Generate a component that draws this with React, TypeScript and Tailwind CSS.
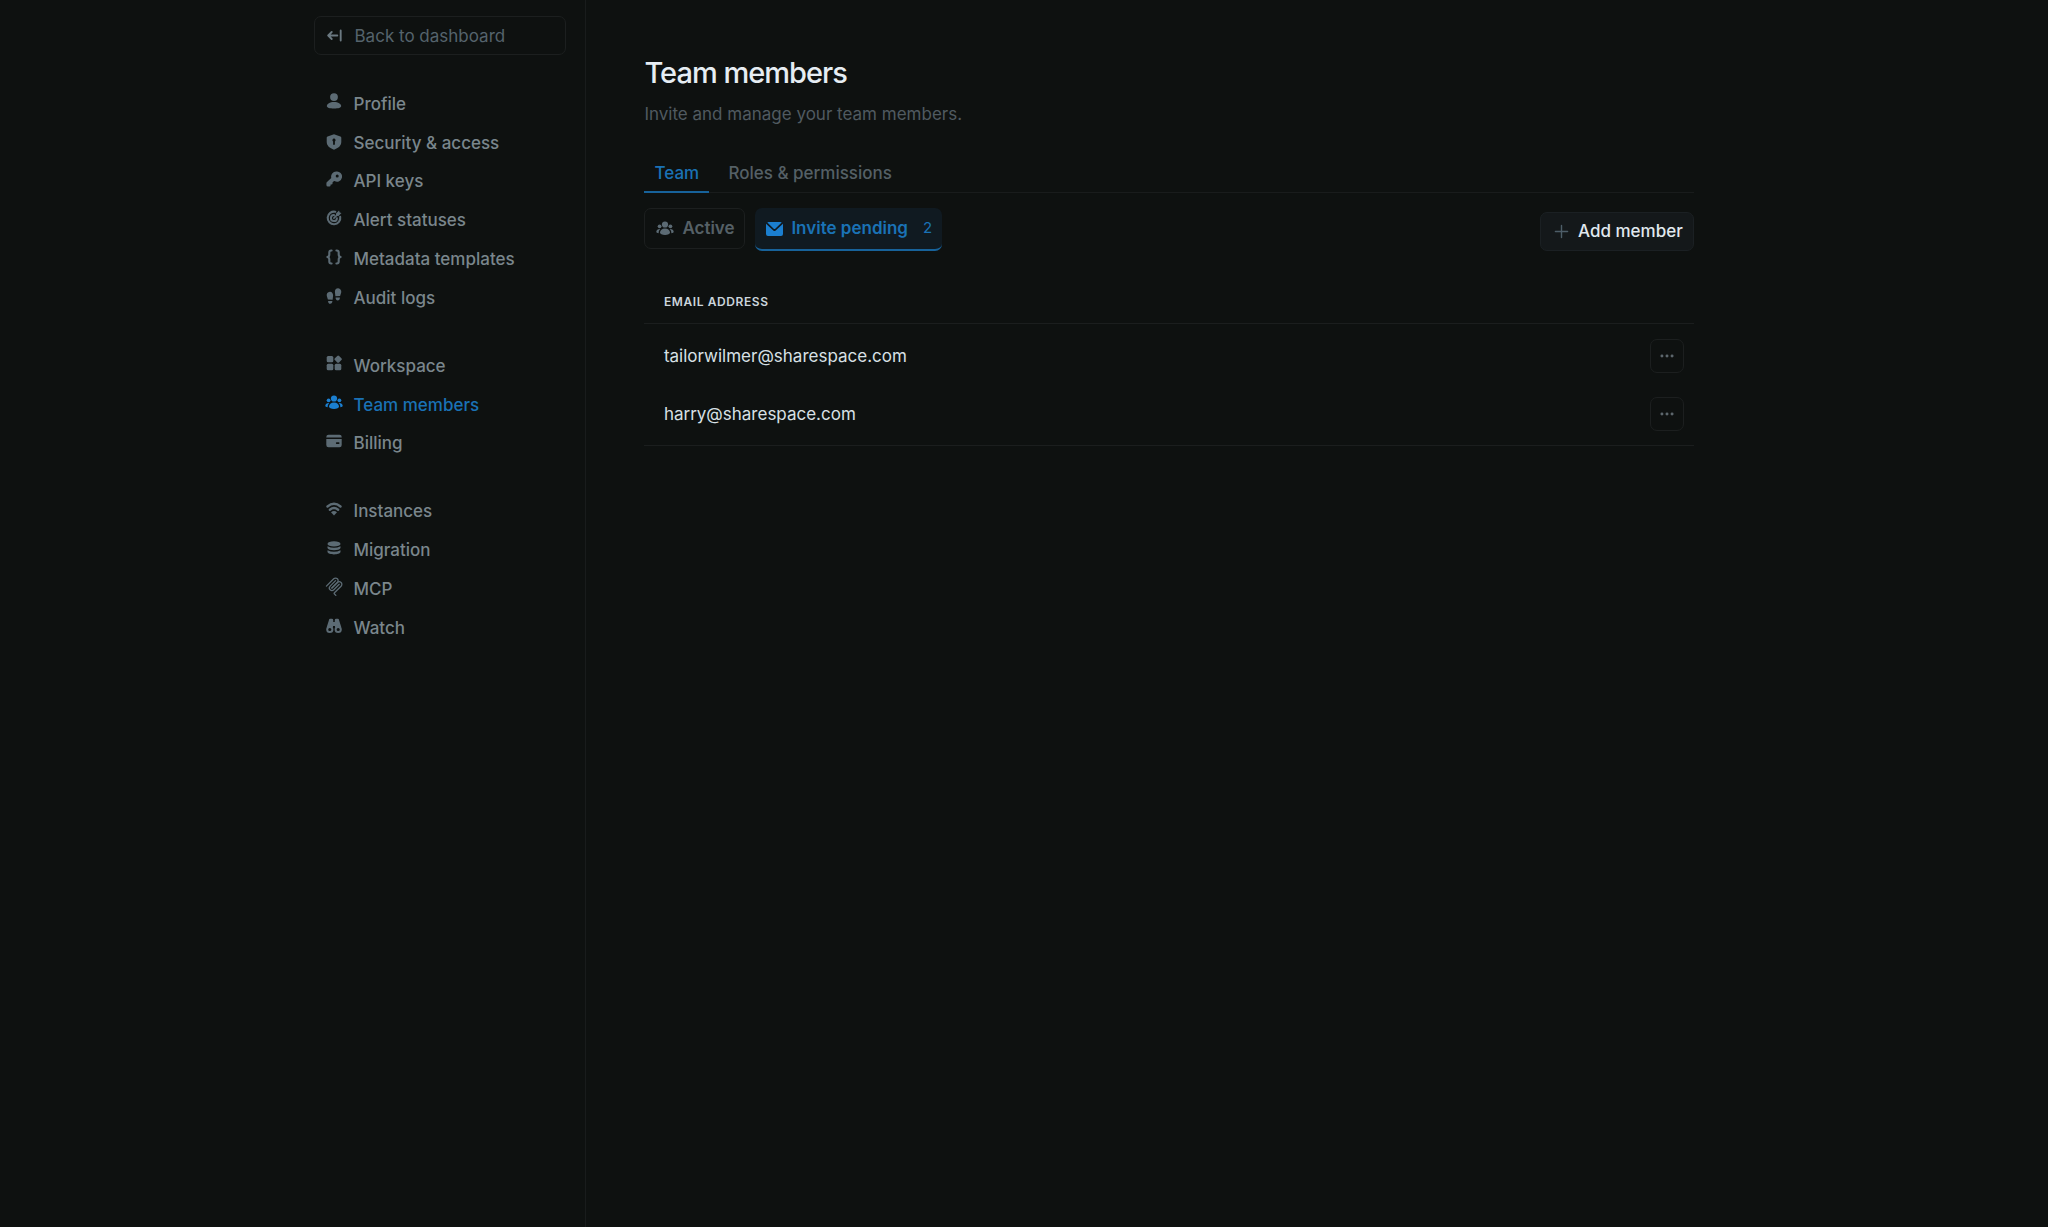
import type { ReactNode } from "react"

function Icon({ children, className = "size-4", viewBox = "0 0 16 16" }: { children: ReactNode; className?: string; viewBox?: string }) {
  return (
    <svg className={`${className} shrink-0`} viewBox={viewBox} fill="currentColor">
      {children}
    </svg>
  )
}

const stroke = { fill: "none", stroke: "currentColor", strokeLinecap: "round", strokeLinejoin: "round" } as const

const icons: Record<string, ReactNode> = {
  profile: (
    <>
      <circle cx="8" cy="4.1" r="3.9" />
      <path d="M8 8.9c4.200 0 7.200 2 7.200 4.200 0 1.700-2.700 2.500-7.200 2.500s-7.200-.8-7.200-2.500c0-2.200 3-4.200 7.200-4.200Z" />
    </>
  ),
  shield: (
    <path fillRule="evenodd" d="M8 .3 1.600 2.400Q.7 2.700.7 3.700v4.100c0 3.900 2.900 6.500 7.300 7.900 4.400-1.400 7.300-4 7.300-7.900V3.700q0-1-.9-1.300ZM8 4.600a1.600 1.600 0 0 0-.9 2.900V10a.9.9 0 0 0 1.800 0V7.500A1.600 1.600 0 0 0 8 4.600Z" />
  ),
  key: (
    <path fillRule="evenodd" d="M10.200.6a5.100 5.100 0 0 0-4.950 6.300L1 11q-.6.600-.6 1.200V14q0 1.500 1.500 1.500h1.500q1.200 0 1.200-1.200v-.8h.8q1.200 0 1.200-1.200v-1l1.200-1.100q.3-.2.7-.1A5.100 5.100 0 1 0 10.200.6Zm1 3a1.500 1.500 0 1 1 0 3 1.500 1.500 0 0 1 0-3Z" />
  ),
  target: (
    <>
      <path {...stroke} strokeWidth="2.100" d="M9.300 1.800A6.300 6.300 0 1 0 14.200 6.900" />
      <path {...stroke} strokeWidth="2" d="M8 5.100a3 3 0 1 0 2.900 3.100" />
      <path {...stroke} strokeWidth="1.700" d="m7.900 8.100 3.200-3.200" />
      <path d="M9.800 3.800 13 .6l.7 1.800 1.800.7-3.200 3.200-2-.5Z" />
    </>
  ),
  braces: (
    <path {...stroke} strokeWidth="2.100" d="M5.600 1.500h-.4Q3.300 1.500 3.300 3.400v2Q3.300 7.600 1.400 8q1.900.4 1.900 2.600v2q0 1.900 1.900 1.900h.4M10.400 1.500h.4q1.900 0 1.900 1.900v2q0 2.200 1.900 2.600-1.900.4-1.900 2.600v2q0 1.900-1.900 1.900h-.4" />
  ),
  footsteps: (
    <>
      <path d="M3.800 3.800C5.900 3.600 7.200 5.500 7.100 7.700L6.600 11.700 1.900 11.500.8 8C.3 5.900 1.700 3.900 3.800 3.800ZM2.100 12.900l4.300.2c0 1.500-.8 2.700-2.200 2.700s-2.100-1.100-2.100-2.900Z" />
      <path d="M12.200.2c-2.100-.1-3.400 1.600-3.300 3.900l.5 4.100 4.700-.1 1.100-3.500C15.700 2.400 14.300.3 12.200.2ZM9.600 9.500l4.300-.1c0 1.800-.8 3-2.200 3s-2.100-1.200-2.100-2.900Z" />
    </>
  ),
  workspace: (
    <>
      <rect x=".7" y=".9" width="6.600" height="6.400" rx="1.500" />
      <rect x=".7" y="8.800" width="6.600" height="6.400" rx="1.500" />
      <rect x="8.700" y="8.800" width="6.600" height="6.400" rx="1.500" />
      <rect x="9.200" y="1.200" width="5.900" height="5.900" rx="1.300" transform="rotate(45 12.150 4.150)" />
    </>
  ),
  users: (
    <>
      <circle cx="9" cy="4.500" r="3.100" />
      <circle cx="3.600" cy="6.300" r="1.900" />
      <circle cx="14.400" cy="6.300" r="1.900" />
      <path d="M9 8.500c3 0 5 2 5 4 0 1.700-2.100 2.400-5 2.400s-5-.7-5-2.400c0-2 2-4 5-4Z" />
      <path d="M3.900 9C1.700 9 .3 10.300.3 11.700c0 .9.800 1.400 2.400 1.500C2.500 11.600 3.100 10.200 4.300 9ZM14.100 9c2.200 0 3.600 1.300 3.600 2.700 0 .9-.8 1.400-2.400 1.500.2-1.600-.4-3-1.600-4.200Z" />
    </>
  ),
  billing: (
    <>
      <path d="M.3 4.600V4q0-2.200 2.200-2.200h11q2.200 0 2.200 2.200v.6Z" />
      <path fillRule="evenodd" d="M.3 6h15.400v6q0 2.200-2.200 2.200h-11Q.3 14.200.3 12Zm10.400 3.200a.8.800 0 0 0 0 1.700h2a.8.800 0 0 0 0-1.700Z" />
    </>
  ),
  wifi: (
    <>
      <path {...stroke} strokeWidth="2.400" d="M1.500 5.500q6.500-5.300 13 0M3.900 8.700q4.100-3.300 8.200 0" />
      <path d="M5 11.300Q8 8.900 11 11.300L8 14.400Z" />
    </>
  ),
  database: (
    <>
      <ellipse cx="8" cy="3.900" rx="6.500" ry="2.700" />
      <path d="M1.500 6.200Q8 9.200 14.500 6.200v1.900C13.800 11 2.200 11 1.500 8.100ZM1.500 10.200q6.500 3 13 0v1.800c-.7 3.200-12.300 3.200-13 0Z" />
    </>
  ),
  binoculars: (
    <>
      <path d="M3 2q0-1.200 1.200-1.200h1.600Q7.200.8 7.200 2v2h1.600V2q0-1.200 1.400-1.200h1.600Q13 .8 13 2l2.400 7.500H9V8H7v1.500H.6Z" />
      <path fillRule="evenodd" d="M3.800 7.900a3.600 3.600 0 1 1 0 7.200 3.600 3.600 0 0 1 0-7.200Zm0 2a1.600 1.600 0 1 0 0 3.200 1.600 1.600 0 0 0 0-3.200ZM12.200 7.900a3.600 3.600 0 1 1 0 7.200 3.600 3.600 0 0 1 0-7.200Zm0 2a1.600 1.600 0 1 0 0 3.200 1.600 1.600 0 0 0 0-3.200Z" />
    </>
  ),
}

function NavIcon({ name }: { name: string }) {
  if (name === "mcp") {
    return (
      <Icon className="size-[19px]" viewBox="6 0 174 176">
        <g {...stroke} strokeWidth="12">
          <path d="M18 84.853 85.882 16.971c9.373-9.373 24.569-9.373 33.941 0 9.373 9.372 9.373 24.568 0 33.941L68.558 102.177" />
          <path d="m69.265 101.470 50.558-50.558c9.373-9.373 24.569-9.373 33.942 0l.353.353c9.373 9.373 9.373 24.569 0 33.941L92.725 146.600c-3.124 3.124-3.124 8.189 0 11.313l12.606 12.607" />
          <path d="M102.853 33.941 52.648 84.146c-9.372 9.372-9.372 24.568 0 33.941 9.373 9.372 24.569 9.372 33.941 0l50.205-50.205" />
        </g>
      </Icon>
    )
  }
  if (name === "users") {
    return <Icon className="h-4 w-[18px]" viewBox="0 0 18 16">{icons.users}</Icon>
  }
  return <Icon>{icons[name]}</Icon>
}

const navGroups = [
  [
    { label: "Profile", icon: "profile" },
    { label: "Security & access", icon: "shield" },
    { label: "API keys", icon: "key" },
    { label: "Alert statuses", icon: "target" },
    { label: "Metadata templates", icon: "braces" },
    { label: "Audit logs", icon: "footsteps" },
  ],
  [
    { label: "Workspace", icon: "workspace" },
    { label: "Team members", icon: "users" },
    { label: "Billing", icon: "billing" },
  ],
  [
    { label: "Instances", icon: "wifi" },
    { label: "Migration", icon: "database" },
    { label: "MCP", icon: "mcp" },
    { label: "Watch", icon: "binoculars" },
  ],
]

const invites = ["tailorwilmer@sharespace.com", "harry@sharespace.com"]

function Sidebar() {
  return (
    <aside className="w-[586px] shrink-0 border-r border-[#191c1c] pl-[314px] pt-4">
      <button className="flex h-[39px] w-[252px] items-center rounded-[7px] border border-[#1c1f1f] pl-3 text-[17px] text-[#55636c]">
        <Icon className="size-[15px] text-[#6b7981]">
          <path {...stroke} strokeWidth="2" d="M11 8H1.500M5 4.300 1.300 8 5 11.700M14.600 2.700v10.600" />
        </Icon>
        <span className="ml-[12.500px] pt-0.5">Back to dashboard</span>
      </button>
      <nav className="mt-[29px] flex flex-col gap-[29px]">
        {navGroups.map((group, i) => (
          <ul key={i}>
            {group.map((item) => {
              const active = item.label === "Team members"
              return (
                <li key={item.label} className={`flex h-[38.85px] items-center pl-[10px] text-[17px] font-medium ${active ? "text-[#1a72b5]" : "text-[#7a868c]"}`}>
                  <span className={`flex w-5 justify-center ${item.icon === "shield" ? "" : "pb-1"} ${active ? "text-[#1b7fd0]" : "text-[#5c6b74]"}`}>
                    <NavIcon name={item.icon} />
                  </span>
                  <span className="ml-[9.500px] pt-0.5">{item.label}</span>
                </li>
              )
            })}
          </ul>
        ))}
      </nav>
    </aside>
  )
}

export default function App() {
  return (
    <div className="flex h-[1227px] w-[2048px] overflow-hidden bg-[#0e1110] font-['Inter',sans-serif] whitespace-nowrap">
      <Sidebar />

      <main className="w-[1107.500px] pl-[58.400px] pt-[54px]">
        <h1 className="text-[29px] leading-[38px] font-medium tracking-[-0.98px] text-[#e6edf3]">Team members</h1>
        <p className="mt-2 text-[17px] leading-7 text-[#505a60]">Invite and manage your team members.</p>

        <div className="mt-[25px] flex h-10 border-b border-[#191c1c] text-[17px] font-medium">
          <div className="-mb-px flex w-[65px] justify-center border-b-2 border-[#17629a] text-[#1a72b5]">
            <span className="pt-2">Team</span>
          </div>
          <span className="ml-[19px] pt-2 text-[#556066]">Roles & permissions</span>
        </div>

        <div className="mt-[15px] flex items-start">
          <button className="flex h-[41px] w-[101px] items-center rounded-[7px] border border-[#1c1f1f] pl-[11px] text-[17px] font-semibold text-[#556066]">
            <span className="pb-0.5 text-[#5c6b74]"><NavIcon name="users" /></span>
            <span className="ml-2 pt-px">Active</span>
          </button>
          <button className="ml-[10px] flex h-[43px] w-[187px] items-center rounded-[7px] border-b-2 border-[#17629a] bg-[#101a21] pl-[11px] text-[17px] font-semibold text-[#1a72b5]">
            <Icon className="h-[14px] w-[17px] text-[#1b7fd0]" viewBox="0 0 17 14">
              <path d="M0 1.700 7.300 8.600q1.200 1 2.400 0L17 1.700V12q0 2-2 2H2q-2 0-2-2ZM1.300.500Q1.700 0 2.500 0h12q.8 0 1.200.500L9 6.900q-.5.400-1 0Z" />
            </Icon>
            <span className="ml-2 pt-px">Invite pending</span>
            <span className="ml-[15px] text-[15px] font-normal">2</span>
          </button>
          <button className="mt-1 ml-auto flex h-[39px] w-[154px] items-center rounded-[7px] border border-[#1b2023] bg-[#14181a] pl-[13px] text-[17px] font-medium text-[#e1e9ef]">
            <Icon className="size-[15px] text-[#4d5d68]">
              <path {...stroke} strokeWidth="1.500" d="M8 1.500v13M1.500 8h13" />
            </Icon>
            <span className="ml-[9.500px] pt-px">Add member</span>
          </button>
        </div>

        <table className="mt-[28px] w-full border-b border-[#1b1e1e] text-left">
          <thead>
            <tr className="h-11 border-b border-[#1b1e1e]">
              <th className="pt-0.5 pl-[19.500px] text-[12px] font-semibold tracking-[0.6px] text-[#cbd5dc]">EMAIL ADDRESS</th>
              <th />
            </tr>
          </thead>
          <tbody>
            {invites.map((email, i) => (
              <tr key={email} className={i === 0 ? "h-[65px]" : "h-[57px]"}>
                <td className={`pl-[19.500px] text-[17px] text-[#d8e0e5] ${i === 0 ? "pt-0.5" : "pb-[3px]"}`}>{email}</td>
                <td className={`pr-[10px] ${i === 0 ? "" : "pb-1"}`}>
                  <button className="ml-auto flex size-[34px] items-center justify-center rounded-[7px] border border-[#1c1f1f] text-[#5c666c]">
                    <Icon className="size-[14px]">
                      <circle cx="2.200" cy="8" r="1.700" />
                      <circle cx="8" cy="8" r="1.700" />
                      <circle cx="13.800" cy="8" r="1.700" />
                    </Icon>
                  </button>
                </td>
              </tr>
            ))}
          </tbody>
        </table>
      </main>
    </div>
  )
}
